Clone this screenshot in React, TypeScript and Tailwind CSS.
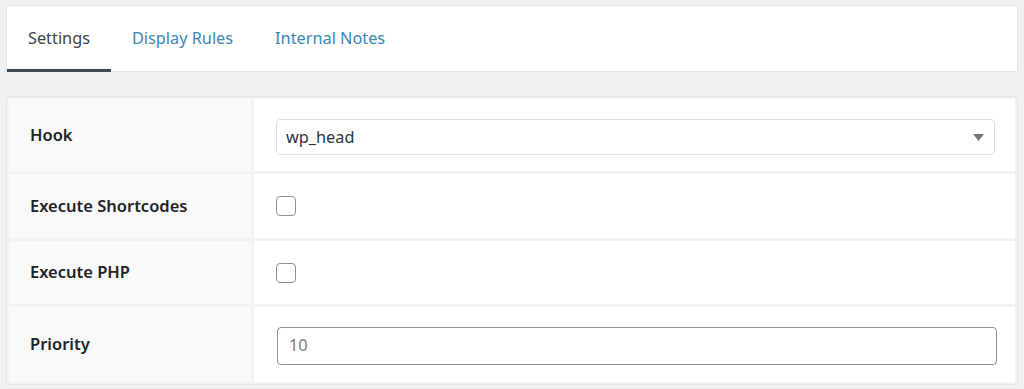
import React from "react";

const font = { fontFamily: '"Noto Sans", "Open Sans", "Liberation Sans", sans-serif' };

function Tab({ label, active }: { label: string; active?: boolean }) {
  return (
    <div
      className={
        "relative flex h-full items-center px-[21px] text-[16.3px] " +
        (active ? "text-[#3c434a]" : "text-[#3a86b9]")
      }
    >
      {label}
      {active && <div className="absolute bottom-[-1px] left-0 right-0 h-[3px] bg-[#3c4a55]" />}
    </div>
  );
}

function Label({ children }: { children: React.ReactNode }) {
  return (
    <div className="flex items-center bg-[#f9f9f9] px-[21px] text-[16.5px] font-semibold text-[#1d2327]">
      {children}
    </div>
  );
}

function Checkbox() {
  return <div className="h-[20px] w-[20px] rounded-[4px] border border-[#8c8f94] bg-white" />;
}

export default function App() {
  return (
    <div className="h-[389px] w-full bg-[#f0f0f1] px-[6px] pt-[5px]" style={font}>
      <div className="flex h-[67px] border border-[#e2e4e7] bg-white">
        <Tab label="Settings" active />
        <Tab label="Display Rules" />
        <Tab label="Internal Notes" />
      </div>
      <div className="mt-[24px] grid grid-cols-[242px_1fr] grid-rows-[72px_64px_63px_75px] gap-[3px] border border-[#e2e4e7] bg-[#f2f2f2] p-[2px]">
        <Label>Hook</Label>
        <div className="flex items-center bg-white pl-[22px] pr-[20px] pt-[4px]">
          <div className="flex h-[36px] w-full items-center justify-between rounded-[4px] border border-[#dcdcde] bg-white pl-[9px] pr-[10px] text-[16.3px] text-[#2c3338]">
            <span>wp_head</span>
            <svg width="11" height="7" viewBox="0 0 11 7">
              <polygon points="0,0 11,0 5.5,7" fill="#757575" />
            </svg>
          </div>
        </div>
        <Label>Execute Shortcodes</Label>
        <div className="flex items-center bg-white px-[22px]">
          <Checkbox />
        </div>
        <Label>Execute PHP</Label>
        <div className="flex items-center bg-white px-[22px]">
          <Checkbox />
        </div>
        <Label>Priority</Label>
        <div className="flex items-center bg-white pl-[23px] pr-[18px] pt-[2px]">
          <div className="flex h-[38px] w-full items-center rounded-[4px] border border-[#8c8f94] bg-white px-[11px] text-[16.3px] text-[#787c82]">
            10
          </div>
        </div>
      </div>
    </div>
  );
}
